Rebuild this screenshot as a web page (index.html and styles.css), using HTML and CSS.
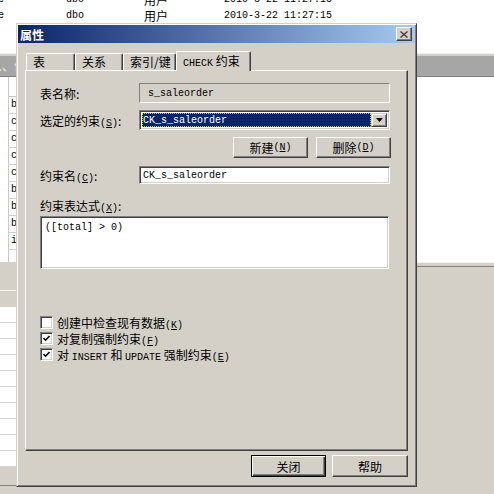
FILE: index.html
```html
<!DOCTYPE html>
<html lang="zh-CN">
<head>
    <meta charset="UTF-8">
    <title>属性</title>
    <link rel="stylesheet" href="styles.css">
</head>
<body>

    <!-- janela de fundo (lista + grade) -->
    <div class="desk">
        <div class="list">
            <div class="list-row">
                <span class="c-name en">e</span>
                <span class="c-owner en">dbo</span>
                <span class="c-type">用户</span>
                <span class="c-date en">2010-3-22 11:27:15</span>
            </div>
            <div class="list-row">
                <span class="c-name en">e</span>
                <span class="c-owner en">dbo</span>
                <span class="c-type">用户</span>
                <span class="c-date en">2010-3-22 11:27:15</span>
            </div>
        </div>
        <div class="child-caption"><span class="caption-text">人、位</span></div>
        <div class="child-body">
            <div class="grid-col">
                <div class="grid-head"></div>
                <div class="grid-cell en">b</div>
                <div class="grid-cell en">c</div>
                <div class="grid-cell en">c</div>
                <div class="grid-cell en">c</div>
                <div class="grid-cell en">c</div>
                <div class="grid-cell en">b</div>
                <div class="grid-cell en">b</div>
                <div class="grid-cell en">b</div>
                <div class="grid-cell en">i</div>
                <div class="grid-cell en"></div>
            </div>
            <div class="child-white"></div>
        </div>
        <div class="lower">
            <div class="lower-left">
                <div class="lower-gap"></div>
                <div class="lower-rows">
                    <div class="lower-row"></div><div class="lower-row"></div><div class="lower-row"></div>
                    <div class="lower-row"></div><div class="lower-row"></div><div class="lower-row"></div>
                    <div class="lower-row"></div><div class="lower-row"></div><div class="lower-row"></div>
                    <div class="lower-row"></div>
                </div>
                <div class="lower-foot"></div>
            </div>
            <div class="lower-right"></div>
        </div>
    </div>

    <!-- diálogo de propriedades -->
    <div class="dialog">
        <div class="titlebar">
            <span class="title">属性</span>
            <span class="close-btn">
                <svg width="8" height="7" viewBox="0 0 8 7"><path d="M0.5 0.5 L7.5 6.5 M7.5 0.5 L0.5 6.5" stroke="#404040" stroke-width="1.4" fill="none"/></svg>
            </span>
        </div>
        <div class="dialog-body">
            <div class="tabs">
                <div class="tab t1">表</div>
                <div class="tab t2">关系</div>
                <div class="tab t3">索引/键</div>
                <div class="tab active"><span class="en">CHECK</span> 约束</div>
            </div>
            <div class="tab-panel">
                <div class="form-row first">
                    <span class="label">表名称:</span>
                    <div class="field disabled"><span class="en">s_saleorder</span></div>
                </div>
                <div class="form-row">
                    <span class="label">选定的约束<span class="en">(<u>S</u>)</span>:</span>
                    <div class="combo sunken">
                        <div class="combo-value"><span class="en">CK_s_saleorder</span></div>
                        <div class="combo-btn">
                            <svg width="7" height="4" viewBox="0 0 7 4"><path d="M0 0 H7 L3.5 4 Z" fill="#000"/></svg>
                        </div>
                    </div>
                </div>
                <div class="btn-row">
                    <button class="btn">新建<span class="en">(<u>N</u>)</span></button>
                    <button class="btn">删除<span class="en">(<u>D</u>)</span></button>
                </div>
                <div class="form-row">
                    <span class="label">约束名<span class="en">(<u>C</u>)</span>:</span>
                    <div class="field sunken short"><span class="en">CK_s_saleorder</span></div>
                </div>
                <div class="expr-label">约束表达式<span class="en">(<u>X</u>)</span>:</div>
                <div class="textarea sunken"><span class="en">([total] &gt; 0)</span></div>
                <div class="checks">
                    <div class="check-row">
                        <span class="checkbox sunken"></span>
                        <span>创建中检查现有数据<span class="en">(<u>K</u>)</span></span>
                    </div>
                    <div class="check-row">
                        <span class="checkbox sunken"><svg width="7" height="7" viewBox="0 0 7 7"><path d="M0.5 3 L2.5 5.2 L6.5 1" stroke="#000" stroke-width="1.6" fill="none"/></svg></span>
                        <span>对复制强制约束<span class="en">(<u>F</u>)</span></span>
                    </div>
                    <div class="check-row">
                        <span class="checkbox sunken"><svg width="7" height="7" viewBox="0 0 7 7"><path d="M0.5 3 L2.5 5.2 L6.5 1" stroke="#000" stroke-width="1.6" fill="none"/></svg></span>
                        <span>对 <span class="en">INSERT</span> 和 <span class="en">UPDATE</span> 强制约束<span class="en">(<u>E</u>)</span></span>
                    </div>
                </div>
            </div>
            <div class="footer">
                <button class="btn default">关闭</button>
                <button class="btn wide">帮助</button>
            </div>
        </div>
    </div>

</body>
</html>
```

FILE: styles.css
```css
/* --- estilo Windows 2000 --- */
:root {
    --face: #d4d0c8;
    --shadow: #808080;
    --dark: #404040;
    --light: #ffffff;
    --navy: #0a246a;
}

* { box-sizing: border-box; }

body {
    margin: 0;
    width: 494px;
    height: 494px;
    overflow: hidden;
    position: relative;
    background: var(--face);
    font-family: "Noto Sans CJK SC", sans-serif;
    font-size: 12px;
    color: #000;
}

.en { font-family: "Liberation Mono", monospace; font-size: 10px; }

/* fundo */
.desk { display: flex; flex-direction: column; height: 494px; }

.list { height: 53px; background: #fff; overflow: hidden; }
.list-row { position: relative; height: 16px; display: flex; align-items: center; white-space: nowrap; }
.list-row:first-child { margin-top: -9px; }
.c-name { width: 68px; margin-left: -2px; }
.c-owner { width: 78px; }
.c-type { width: 80px; }

.child-caption {
    height: 24px;
    border-top: 1px solid #f0f0f0;
    box-shadow: inset 0 1px var(--face), inset 0 2px var(--face), inset 0 -1px var(--shadow);
    background: #a6a6a6;
    display: flex;
    align-items: center;
    overflow: hidden;
}
.caption-text { margin-left: -10px; color: #dcdcdc; font-weight: bold; }

.child-body { height: 185px; display: flex; background: #fff; }
.grid-col { width: 40px; border-left: 8px solid #fff; box-shadow: inset 1px 0 #c8c8c8; }
.grid-head { height: 20px; border-bottom: 1px solid #c8c8c8; }
.grid-cell { height: 17px; border-bottom: 1px solid #d0d0d0; padding-left: 3px; line-height: 16px; }
.child-white { flex: 1; }

.lower { flex: 1; display: flex; }
.lower-left { width: 40px; display: flex; flex-direction: column; }
.lower-gap { height: 45px; box-shadow: inset 0 -16px var(--face), inset 0 -17px #f4f4f4; }
.lower-rows { background: #fff; }
.lower-row { height: 16px; border-bottom: 1px solid #d4d4d4; }
.lower-foot { flex: 1; border-bottom: 1px solid var(--shadow); margin-bottom: 8px; }
.lower-right { flex: 1; border-top: 1px solid #f4f4f4; box-shadow: inset 0 3px var(--face), inset 0 4px var(--shadow); }

/* diálogo */
.dialog {
    position: absolute;
    left: 16px;
    top: 23px;
    width: 401px;
    height: 464px;
    background: var(--face);
    border: 1px solid;
    border-color: var(--face) var(--dark) var(--dark) var(--face);
    box-shadow: inset 1px 1px var(--light), inset -1px -1px var(--shadow);
    padding: 1px;
}

.titlebar {
    height: 18px;
    background: linear-gradient(to right, var(--navy), #a6caf0);
    display: flex;
    align-items: center;
    justify-content: space-between;
    padding: 0 3px 0 2px;
}
.title { color: #fff; font-weight: bold; font-size: 12px; }
.close-btn {
    width: 16px;
    height: 14px;
    background: var(--face);
    border: 1px solid;
    border-color: var(--light) var(--dark) var(--dark) var(--light);
    box-shadow: inset -1px -1px var(--shadow);
    display: flex;
    align-items: center;
    justify-content: center;
}

.dialog-body { padding: 8px 7px 0 7px; }

.tabs { display: flex; align-items: flex-start; height: 20px; margin-bottom: -1px; padding-left: 1px; position: relative; z-index: 1; }
.tab {
    margin-top: 2px;
    height: 17px;
    background: var(--face);
    border-top: 1px solid var(--light);
    border-left: 1px solid var(--light);
    border-right: 1px solid var(--dark);
    box-shadow: inset -1px 0 var(--shadow);
    border-radius: 2px 2px 0 0;
    padding-left: 6px;
    line-height: 15px;
}
.t1 { width: 49px; }
.t2 { width: 48px; }
.t3 { width: 53px; }
.tab.active { margin-top: 0; height: 20px; width: 75px; padding-left: 6px; line-height: 17px; }

.tab-panel {
    height: 381px;
    border: 1px solid;
    border-color: var(--light) var(--dark) var(--dark) var(--light);
    box-shadow: inset -1px -1px var(--shadow);
    padding: 0 0 0 14px;
}

.form-row { display: grid; grid-template-columns: 99px 251px; align-items: center; margin-top: 7px; }
.form-row.first { margin-top: 12px; }
.label { white-space: nowrap; }

.sunken {
    border: 1px solid;
    border-color: var(--shadow) var(--light) var(--light) var(--shadow);
    box-shadow: inset 1px 1px var(--dark), inset -1px -1px var(--face);
    background: #fff;
}

.field { height: 20px; display: flex; align-items: center; padding-left: 8px; }
.field.disabled {
    border: 1px solid;
    border-color: var(--shadow) var(--light) var(--light) var(--shadow);
    background: var(--face);
}
.field.short { height: 18px; padding-left: 3px; }

.combo { height: 20px; display: flex; padding: 2px; }
.combo-value {
    flex: 1;
    background: var(--navy);
    color: #fff;
    outline: 1px dotted #c8c070;
    outline-offset: -1px;
    display: flex;
    align-items: center;
    padding-left: 1px;
}
.combo-btn {
    width: 16px;
    background: var(--face);
    border: 1px solid;
    border-color: var(--face) var(--dark) var(--dark) var(--face);
    box-shadow: inset 1px 1px var(--light), inset -1px -1px var(--shadow);
    display: flex;
    align-items: center;
    justify-content: center;
}

.btn {
    font-family: "Noto Sans CJK SC", sans-serif;
    font-size: 12px;
    color: #000;
    width: 75px;
    height: 21px;
    padding: 0;
    background: var(--face);
    border: 1px solid;
    border-color: var(--light) var(--dark) var(--dark) var(--light);
    box-shadow: inset -1px -1px var(--shadow);
    display: flex;
    align-items: center;
    justify-content: center;
}

.btn-row { display: flex; justify-content: flex-end; gap: 8px; width: 351px; margin-top: 7px; margin-bottom: 8px; }

.expr-label { margin-top: 15px; height: 14px; line-height: 14px; margin-bottom: 3px; }

.textarea { width: 349px; height: 53px; padding: 2px 4px; line-height: 12px; }

.checks { margin-top: 45px; display: flex; flex-direction: column; }
.check-row { height: 16px; display: flex; align-items: center; gap: 4px; white-space: nowrap; }
.checkbox { width: 13px; height: 13px; display: flex; align-items: center; justify-content: center; flex: none; }

.footer { display: flex; justify-content: flex-end; gap: 6px; margin-top: 4px; }
.footer .btn { height: 22px; }
.btn.wide { width: 76px; }
.btn.default {
    border: 1px solid #000;
    box-shadow: inset 1px 1px var(--light), inset -1px -1px var(--dark), inset -2px -2px var(--shadow);
}
```
